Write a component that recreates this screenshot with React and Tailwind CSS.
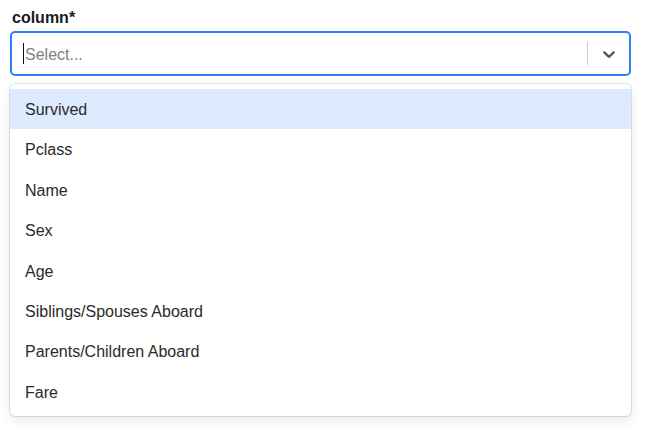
export default function App() {
  const options = [
    "Survived",
    "Pclass",
    "Name",
    "Sex",
    "Age",
    "Siblings/Spouses Aboard",
    "Parents/Children Aboard",
    "Fare",
  ];
  return (
    <div className="min-h-[433px] w-[645px] bg-white pl-[10px] pt-[8px]" style={{ fontFamily: '"Liberation Sans", Arial, sans-serif' }}>
      <div className="pl-[2px] text-[16px] font-bold leading-5 text-[#1a1a1a]">column*</div>
      <div className="mt-[3px] flex h-[45px] w-[621px] items-center rounded-[5px] border-2 border-[#2f80f6] bg-white">
        <div className="flex flex-1 items-center pl-[11px]">
          <span className="mr-[1px] inline-block h-[21px] w-px bg-[#111]" />
          <span className="pt-[3px] text-[16px] text-[#808080]">Select...</span>
        </div>
        <span className="h-[23px] w-px self-center bg-[#cccccc]" />
        <div className="flex w-[41px] items-center justify-center text-[#555]">
          <svg width="20" height="20" viewBox="0 0 20 20" fill="currentColor">
            <path d="M4.516 7.548c0.436-0.446 1.043-0.481 1.576 0l3.908 3.747 3.908-3.747c0.533-0.481 1.141-0.446 1.574 0 0.436 0.445 0.408 1.197 0 1.615-0.406 0.418-4.695 4.502-4.695 4.502-0.217 0.223-0.502 0.335-0.787 0.335s-0.57-0.112-0.789-0.335c0 0-4.287-4.084-4.695-4.502s-0.436-1.17 0-1.615z" />
          </svg>
        </div>
      </div>
      <div className="mt-[8px] w-[621px] rounded-[5px] bg-white pb-[4px] pt-[5px] shadow-[0_0_0_1px_rgba(0,0,0,0.1),0_4px_11px_rgba(0,0,0,0.1)]">
        {options.map((o, i) => (
          <div
            key={o}
            className={
              "pb-[7px] pl-[15px] pt-[9px] text-[16px] leading-[24.4px] text-[#2a2a2a] " +
              (i === 0 ? "bg-[#deebff]" : "")
            }
          >
            {o}
          </div>
        ))}
      </div>
    </div>
  );
}
